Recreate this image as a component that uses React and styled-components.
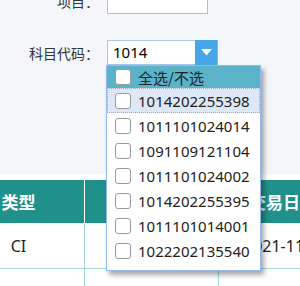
import React from "react";
import styled, { createGlobalStyle } from "styled-components";

const GlobalStyle = createGlobalStyle`
  html, body {
    margin: 0;
    padding: 0;
    background: #f5f6fa;
    overflow: hidden;
  }
  body {
    font-family: "Noto Sans", "Noto Sans CJK SC", sans-serif;
    color: #222;
  }
`;

const Page = styled.div`
  width: 300px;
  height: 286px;
  overflow: hidden;
`;

const Form = styled.div`
  display: flex;
  flex-direction: column;
  gap: 26px;
  margin-top: -12px;
`;

const FieldRow = styled.div`
  display: grid;
  grid-template-columns: 107px auto;
  align-items: center;
`;

const Label = styled.label`
  font-family: "Noto Sans CJK SC", sans-serif;
  font-size: 14px;
  color: #333;
  text-align: right;
  padding-right: 8px;
`;

const TextInput = styled.div`
  width: 101px;
  height: 26px;
  box-sizing: border-box;
  background: #fff;
  border: 1px solid #b4bcd4;
`;

const Combo = styled.div`
  position: relative;
  display: flex;
  width: 111px;
  height: 25px;
`;

const ComboValue = styled.div`
  flex: 1;
  box-sizing: border-box;
  background: #fff;
  border: 1px solid #a9c7ea;
  border-right: none;
  padding-left: 5px;
  font-size: 15px;
  line-height: 23px;
  color: #000;
`;

const ComboButton = styled.div`
  width: 23px;
  box-sizing: border-box;
  background: #47a6e8;
  border-right: 1px solid #b0b0b0;
  display: flex;
  align-items: center;
  justify-content: center;
`;

const Panel = styled.div`
  position: absolute;
  top: 25px;
  left: -1px;
  width: 155px;
  box-sizing: border-box;
  background: #fff;
  border: 1px solid #94b8f0;
  box-shadow: 3px 4px 5px rgba(0, 0, 0, 0.35);
  padding-bottom: 7px;
  z-index: 5;
`;

const Option = styled.div`
  display: flex;
  align-items: center;
  gap: 7px;
  height: ${p => (p.head ? "22px" : "25px")};
  box-sizing: border-box;
  padding-left: 7px;
  font-size: 15px;
  color: #222;
  background: ${p => (p.head ? "#5ab3c9" : p.hover ? "#dde7f6" : "#fff")};
  border: 1px dotted ${p => (p.hover ? "#8fb0e6" : "transparent")};
  font-family: ${p =>
    p.head ? '"Noto Sans CJK SC", sans-serif' : '"Noto Sans", sans-serif'};
`;

const Box = styled.span`
  width: 16px;
  height: 16px;
  box-sizing: border-box;
  background: #fff;
  border: 1px solid #9a9a9a;
  border-radius: 3px;
  flex: none;
`;

const TableArea = styled.div`
  margin-top: 109px;
  background: #fff;
  padding-top: 6px;
  margin-left: -47px;
`;

const Grid = styled.div`
  display: grid;
  grid-template-columns: 132px 134px 130px;
`;

const HeadCell = styled.div`
  height: 43px;
  background: #1f918a;
  color: #fff;
  font-family: "Noto Sans CJK SC", sans-serif;
  font-weight: 700;
  font-size: 17px;
  display: flex;
  align-items: center;
  justify-content: ${p => (p.left ? "flex-start" : "center")};
  padding-left: ${p => p.pad || 0}px;
  border-right: 1px solid #fff;
`;

const BodyCell = styled.div`
  height: 46px;
  box-sizing: border-box;
  border-right: 1px solid #a9d6d8;
  border-bottom: 1px solid #a9d6d8;
  font-size: 16px;
  color: #222;
  display: flex;
  align-items: center;
  justify-content: ${p => (p.left ? "flex-start" : "center")};
  padding-left: ${p => p.pad || 0}px;
`;

const codes = [
  "1014202255398",
  "1011101024014",
  "1091109121104",
  "1011101024002",
  "1014202255395",
  "1011101014001",
  "1022202135540",
];

export default function App() {
  return (
    <Page>
      <GlobalStyle />
      <Form>
        <FieldRow>
          <Label>项目：</Label>
          <TextInput />
        </FieldRow>
        <FieldRow>
          <Label>科目代码：</Label>
          <Combo>
            <ComboValue>1014</ComboValue>
            <ComboButton>
              <svg width="11" height="7" viewBox="0 0 11 7">
                <path d="M0 0 L11 0 L5.5 6.5 Z" fill="#fff" />
              </svg>
            </ComboButton>
            <Panel>
              <Option head>
                <Box />
                全选/不选
              </Option>
              {codes.map((c, i) => (
                <Option key={c} hover={i === 0}>
                  <Box />
                  {c}
                </Option>
              ))}
            </Panel>
          </Combo>
        </FieldRow>
      </Form>
      <TableArea>
        <Grid>
          <HeadCell>类型</HeadCell>
          <HeadCell />
          <HeadCell left pad={30}>交易日</HeadCell>
          <BodyCell>CI</BodyCell>
          <BodyCell />
          <BodyCell left pad={25}>2021-11</BodyCell>
          <BodyCell />
          <BodyCell />
          <BodyCell />
        </Grid>
      </TableArea>
    </Page>
  );
}
